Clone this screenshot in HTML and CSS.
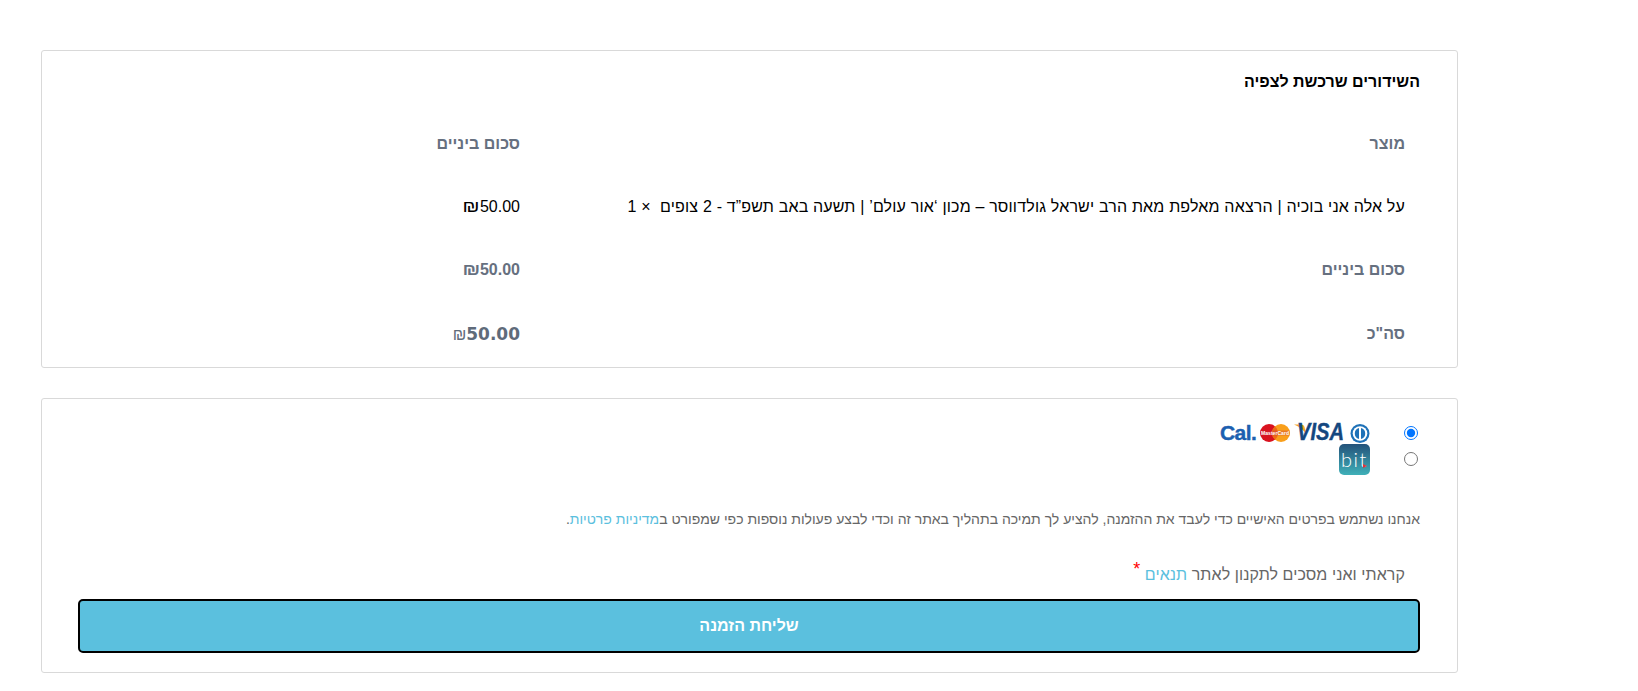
FILE: index.html
```html
<!DOCTYPE html>
<html lang="he" dir="rtl">
<head>
<meta charset="utf-8">
<title>תשלום</title>
<link rel="stylesheet" href="styles.css">
</head>
<body>
<main class="page">
  <section class="card summary">
    <h3 class="summary-title">השידורים שרכשת לצפיה</h3>
    <table class="order">
      <colgroup><col class="col-product"><col class="col-total"></colgroup>
      <thead>
        <tr class="muted head"><th>מוצר</th><th>סכום ביניים</th></tr>
      </thead>
      <tbody>
        <tr class="item"><td class="product">על אלה אני בוכיה | הרצאה מאלפת מאת הרב ישראל גולדווסר – מכון ‘אור עולם’ | תשעה באב תשפ”ד - 2 צופים&nbsp; <span class="qty">×&nbsp;1</span></td><td><bdi><span class="shekel">₪</span>50.00</bdi></td></tr>
      </tbody>
      <tfoot>
        <tr class="muted"><th>סכום ביניים</th><td class="strong"><bdi><span class="shekel">₪</span>50.00</bdi></td></tr>
        <tr class="muted"><th>סה"כ</th><td class="grand"><bdi><span class="cur">₪</span>50.00</bdi></td></tr>
      </tfoot>
    </table>
  </section>

  <section class="card payment">
    <ul class="methods">
      <li class="method">
        <input type="radio" name="pay" class="radio" checked aria-label="כרטיס אשראי">
        <svg class="logo" width="150" height="26" viewBox="0 -3 150 26" aria-hidden="true">
          <text x="0" y="16.500" class="cal">Cal.</text>
          <circle cx="49" cy="10" r="9" fill="#d9121f"/>
          <circle cx="61" cy="10" r="9" fill="#f99f1b"/>
          <path d="M55 3.300a9 9 0 0 1 0 13.400 9 9 0 0 1 0-13.400z" fill="#ee6a16"/>
          <rect x="40.500" y="7.500" width="29" height="5" fill="#c9323c" opacity=".35"/>
          <text x="55" y="11.700" class="mc" textLength="28" lengthAdjust="spacingAndGlyphs">MasterCard</text>
          <path d="M74 1.500h7.500c1.500 0 2.500 1 3 2.500l1.500 7C83.500 6.500 79 3.500 74 1.500z" fill="#f5a623"/>
          <text x="77" y="17" class="visa" textLength="47" lengthAdjust="spacingAndGlyphs">VISA</text>
          <circle cx="140" cy="10.500" r="9.500" fill="#1f72b8"/>
          <circle cx="140" cy="10.500" r="7.300" fill="#fff"/>
          <path d="M139 5a5.700 5.700 0 0 0 0 11zM141 5v11a5.700 5.700 0 0 0 0-11z" fill="#1f72b8"/>
        </svg>
      </li>
      <li class="method">
        <input type="radio" name="pay" class="radio" aria-label="ביט">
        <span class="bit"><span class="bit-word">bit</span><span class="bit-mark"></span></span>
      </li>
    </ul>
    <p class="privacy">אנחנו נשתמש בפרטים האישיים כדי לעבד את ההזמנה, להציע לך תמיכה בתהליך באתר זה וכדי לבצע פעולות נוספות כפי שמפורט ב<a href="#">מדיניות פרטיות</a>.</p>
    <p class="terms">קראתי ואני מסכים לתקנון לאתר <a href="#">תנאים</a> <abbr class="required">*</abbr></p>
    <button type="button" class="submit">שליחת הזמנה</button>
  </section>
</main>
</body>
</html>
```
FILE: styles.css
```css
* { box-sizing: border-box; }
html, body { margin: 0; padding: 0; background: #fff; }
body {
  font-family: "Liberation Sans", Arial, sans-serif;
  font-size: 16px;
  color: #000;
  height: 691px;
  overflow: hidden;
}
.page {
  width: 1417px;
  margin: 50px 180px 0 0;
}
.card {
  border: 1px solid #d9d9d9;
  border-radius: 3px;
  padding: 0 37px 0 36px;
  background: #fff;
}
.summary { height: 318px; padding-top: 21px; }
.summary-title {
  margin: 0;
  font-size: 16px;
  line-height: 20px;
  font-weight: 700;
}
.order {
  width: 100%;
  margin-top: 20px;
  border-collapse: collapse;
  table-layout: fixed;
  text-align: right;
}
.col-total { width: 457px; }
.order th, .order td {
  padding: 0 15px;
  height: 64px;
  text-align: right;
  font-size: 16px;
  white-space: nowrap;
}
.order .head th { height: 63px; }
.order tbody td { height: 63px; }
.product { letter-spacing: 0.18px; }
.muted { color: #66707f; }
.muted th, .strong { font-weight: 700; }
.qty { font-weight: 400; }
.shekel {
  display: inline-block;
  margin-left: 3px;
  transform: scaleX(1.25);
  transform-origin: right center;
}
.order .grand {
  font-weight: 700;
  font-size: 17px;
  color: #5f6b7a;
  font-family: "DejaVu Sans", sans-serif;
}
.grand .cur { font-size: 16px; font-weight: 400; font-family: "Liberation Sans", sans-serif; }
.payment { margin-top: 30px; height: 275px; padding-top: 21px; }
.methods { list-style: none; margin: 0; padding: 0; }
.method {
  display: flex;
  align-items: center;
  height: 26px;
}
.radio {
  width: 14px;
  height: 14px;
  margin: 0 2px 0 0;
  flex: none;
  accent-color: #0075ff;
}
.logo { display: block; margin-right: 34px; direction: ltr; flex: none; }
.visa { font: italic 700 23px "Liberation Sans", sans-serif; fill: #14477f; stroke: #14477f; stroke-width: 0.4px; }
.mc { font: 700 4.6px "Liberation Sans", sans-serif; fill: #fff; text-anchor: middle; }
.cal { font: 700 21px "Liberation Sans", sans-serif; fill: #1c5fb0; stroke: #1c5fb0; stroke-width: 0.4px; letter-spacing: -0.6px; }
.bit {
  position: relative;
  flex: none;
  width: 31px;
  height: 31px;
  margin-right: 34px;
  border-radius: 5px;
  background: linear-gradient(#24527a, #3fb0b8);
  display: flex;
  align-items: center;
  justify-content: center;
  direction: ltr;
}
.bit-word {
  font-family: Lato, "Liberation Sans", sans-serif;
  font-weight: 300;
  font-size: 20px;
  color: #fff;
  line-height: 1;
  letter-spacing: 1.5px;
}
.bit-mark {
  position: absolute;
  right: 3px;
  top: 20px;
  width: 0;
  height: 0;
  border-left: 4px solid #e0323c;
  border-top: 2px solid transparent;
  border-bottom: 2px solid transparent;
}
.privacy {
  margin: 37px 0 0;
  font-size: 14px;
  line-height: 20px;
  color: #666;
}
a { color: #5bc0de; text-decoration: none; }
.terms {
  margin: 31px 0 0;
  padding-right: 15px;
  font-size: 16px;
  line-height: 20px;
  letter-spacing: 0.08px;
  color: #666;
}
.required {
  color: #f00;
  font-size: 18px;
  vertical-align: 5px;
  line-height: 1;
}
.submit {
  display: block;
  width: 100%;
  height: 54px;
  margin-top: 14px;
  background: #5bc0de;
  border: 2px solid #000;
  border-radius: 5px;
  color: #fff;
  font: 700 16px "Liberation Sans", sans-serif;
}
```
